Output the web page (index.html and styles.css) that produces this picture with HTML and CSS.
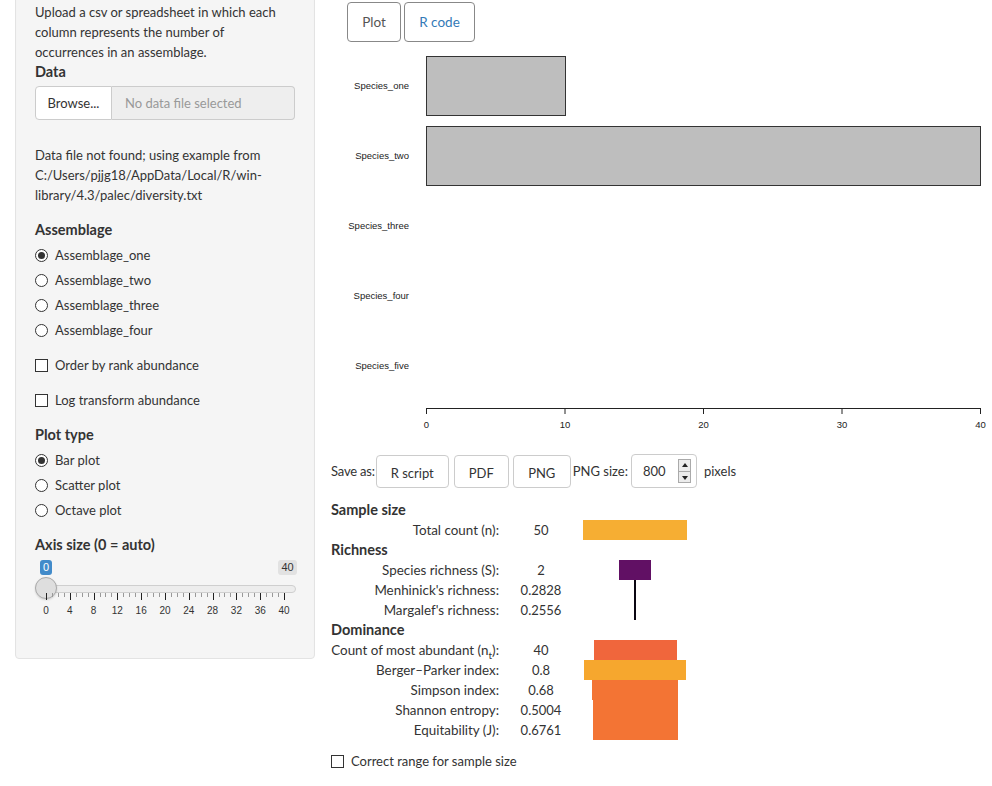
FILE: index.html
```html
<!DOCTYPE html>
<html>
<head>
<meta charset="utf-8">
<link rel="stylesheet" href="styles.css">
</head>
<body>
<div class="page">
  <aside class="well">
    <p class="intro">Upload a csv or spreadsheet in which each column represents the number of occurrences in an assemblage.</p>
    <div class="label lbl-data">Data</div>
    <div class="file-group">
      <div class="browse">Browse...</div>
      <div class="file-name">No data file selected</div>
    </div>
    <p class="note">Data file not found; using example from C:/Users/pjjg18/AppData/Local/R/win-library/4.3/palec/diversity.txt</p>

    <div class="label">Assemblage</div>
    <div class="options">
      <label class="opt"><span class="radio on"></span>Assemblage_one</label>
      <label class="opt"><span class="radio"></span>Assemblage_two</label>
      <label class="opt"><span class="radio"></span>Assemblage_three</label>
      <label class="opt"><span class="radio"></span>Assemblage_four</label>
    </div>
    <label class="opt check-row"><span class="check"></span>Order by rank abundance</label>
    <label class="opt check-row"><span class="check"></span>Log transform abundance</label>

    <div class="label">Plot type</div>
    <div class="options">
      <label class="opt"><span class="radio on"></span>Bar plot</label>
      <label class="opt"><span class="radio"></span>Scatter plot</label>
      <label class="opt"><span class="radio"></span>Octave plot</label>
    </div>

    <div class="label">Axis size (0 = auto)</div>
    <div class="slider">
      <span class="badge badge-from">0</span>
      <span class="badge badge-max">40</span>
      <span class="track"></span>
      <span class="handle"></span>
      <span class="ticks"></span>
      <span class="tick-labels">
        <span>0</span><span>4</span><span>8</span><span>12</span><span>16</span><span>20</span><span>24</span><span>28</span><span>32</span><span>36</span><span>40</span>
      </span>
    </div>
  </aside>

  <main class="main">
    <nav class="tabs">
      <span class="tab tab-active">Plot</span>
      <span class="tab tab-link">R code</span>
    </nav>

    <svg class="chart" width="661" height="400" viewBox="0 0 661 400">
      <rect x="95.5" y="14.5" width="139" height="59" fill="#bebebe" stroke="#333" stroke-width="1"/>
      <rect x="95.5" y="84.5" width="554" height="59" fill="#bebebe" stroke="#333" stroke-width="1"/>
      <g text-anchor="end" font-family="Liberation Sans, Arial, sans-serif" font-size="9.5" fill="#222">
        <text x="78" y="46.5">Species_one</text>
        <text x="78" y="116.5">Species_two</text>
        <text x="78" y="186.5">Species_three</text>
        <text x="78" y="256.5">Species_four</text>
        <text x="78" y="326.5">Species_five</text>
      </g>
      <g stroke="#222" stroke-width="1">
        <line x1="95.5" y1="366.5" x2="649.5" y2="366.5"/>
        <line x1="95.5" y1="366" x2="95.5" y2="372"/>
        <line x1="234" y1="366" x2="234" y2="372"/>
        <line x1="372.5" y1="366" x2="372.5" y2="372"/>
        <line x1="511" y1="366" x2="511" y2="372"/>
        <line x1="649.5" y1="366" x2="649.5" y2="372"/>
      </g>
      <g text-anchor="middle" font-family="Liberation Sans, Arial, sans-serif" font-size="9.5" fill="#222">
        <text x="95.5" y="386">0</text>
        <text x="234" y="386">10</text>
        <text x="372.5" y="386">20</text>
        <text x="511" y="386">30</text>
        <text x="649.5" y="386">40</text>
      </g>
    </svg>

    <div class="save-bar">
      <span class="save-label">Save as:</span>
      <span class="btn btn-r">R script</span>
      <span class="btn btn-pdf">PDF</span>
      <span class="btn btn-png">PNG</span>
      <span class="size-label">PNG size:</span>
      <span class="num-input">
        <span class="num-val">800</span>
        <span class="spinner"><span class="spin-up"></span><span class="spin-down"></span></span>
      </span>
      <span class="px-label">pixels</span>
    </div>

    <div class="stats">
      <div class="head">Sample size</div>
      <div class="lab">Total count (n):</div><div class="val">50</div>
      <div class="gfx"><span class="bar c-yellow" style="margin-left:0;width:104px"></span></div>

      <div class="head">Richness</div>
      <div class="lab">Species richness (S):</div><div class="val">2</div>
      <div class="gfx"><span class="bar c-purple" style="margin-left:36px;width:32px"></span></div>
      <div class="lab">Menhinick's richness:</div><div class="val">0.2828</div>
      <div class="gfx"><span class="stem" style="margin-left:51px"></span></div>
      <div class="lab">Margalef's richness:</div><div class="val">0.2556</div>
      <div class="gfx"><span class="stem" style="margin-left:51px"></span></div>

      <div class="head">Dominance</div>
      <div class="lab">Count of most abundant (n<sub>t</sub>):</div><div class="val">40</div>
      <div class="gfx"><span class="bar c-red" style="margin-left:11px;width:83px"></span></div>
      <div class="lab">Berger–Parker index:</div><div class="val">0.8</div>
      <div class="gfx"><span class="bar c-yellow2" style="margin-left:1px;width:102px"></span></div>
      <div class="lab">Simpson index:</div><div class="val">0.68</div>
      <div class="gfx"><span class="bar c-orange" style="margin-left:9px;width:86px"></span></div>
      <div class="lab">Shannon entropy:</div><div class="val">0.5004</div>
      <div class="gfx"><span class="bar c-orange" style="margin-left:10px;width:85px"></span></div>
      <div class="lab">Equitability (J):</div><div class="val">0.6761</div>
      <div class="gfx"><span class="bar c-orange" style="margin-left:10px;width:85px"></span></div>
    </div>

    <label class="opt correct"><span class="check"></span>Correct range for sample size</label>
  </main>
</div>
</body>
</html>
```
FILE: styles.css
```css
* { box-sizing: border-box; }
html, body { margin: 0; padding: 0; background: #fff; }
body {
  font-family: Lato, "Open Sans", sans-serif;
  font-size: 13px;
  line-height: 20px;
  color: #333;
}
.page {
  display: flex;
  align-items: flex-start;
  padding-left: 15px;
}

/* sidebar */
.well {
  width: 300px;
  flex: none;
  margin-top: -18px;
  padding: 19px 19px 38px;
  background: #f5f5f5;
  border: 1px solid #e3e3e3;
  border-radius: 4px;
  box-shadow: inset 0 1px 1px rgba(0,0,0,.05);
}
.intro { margin: 0; }
.label { font-weight: 700; font-size: 14.5px; margin: 15px 0 5px; }
.lbl-data { margin-top: 0; margin-bottom: 4px; }
.file-group {
  display: flex;
  height: 34px;
}
.browse {
  width: 77px;
  flex: none;
  background: #fff;
  border: 1px solid #ccc;
  border-radius: 4px 0 0 4px;
  display: flex; align-items: center; justify-content: center;
}
.file-name {
  flex: 1;
  background: #eee;
  border: 1px solid #ccc;
  border-left: 0;
  border-radius: 0 4px 4px 0;
  color: #999;
  display: flex; align-items: center;
  padding-left: 13px;
}
.note { margin: 25px 0 0; }
.options { display: flex; flex-direction: column; gap: 5px; }
.opt {
  display: flex;
  align-items: center;
  height: 20px;
  white-space: nowrap;
}
.radio, .check {
  width: 13px; height: 13px;
  flex: none;
  border: 1px solid #333;
  background: #fff;
  margin-right: 7px;
  position: relative;
}
.radio { border-radius: 50%; }
.radio.on::after {
  content: "";
  position: absolute;
  left: 2px; top: 2px;
  width: 7px; height: 7px;
  border-radius: 50%;
  background: #333;
}
.check-row { margin-top: 15px; }

/* slider */
.slider {
  position: relative;
  height: 60px;
  font-family: "Liberation Sans", Arial, sans-serif;
}
.badge {
  position: absolute;
  top: 0;
  height: 15px;
  font-size: 11px;
  line-height: 15px;
  text-align: center;
  border-radius: 3px;
}
.badge-from { left: 5px; width: 12px; background: #428bca; color: #fff; }
.badge-max { left: 243px; width: 19px; background: #e2e2e2; color: #333; }
.track {
  position: absolute;
  left: 1px; right: -1px;
  top: 25px; height: 8px;
  background: #ededed;
  border: 1px solid #cfcfcf;
  border-radius: 4px;
}
.handle {
  position: absolute;
  left: 0; top: 17px;
  width: 22px; height: 22px;
  border-radius: 50%;
  background: #dedede;
  border: 1px solid #aaa;
  box-shadow: 0 1px 2px rgba(0,0,0,.15);
}
.ticks {
  position: absolute;
  left: 11px; width: 239px;
  top: 33px; height: 7px;
  background:
    repeating-linear-gradient(90deg, #222 0 1px, transparent 1px 23.8px) 0 0 / 100% 7px no-repeat,
    repeating-linear-gradient(90deg, #999 0 1px, transparent 1px 5.95px) 0 0 / 100% 4px no-repeat;
}
.tick-labels {
  position: absolute;
  left: -1px; width: 262px;
  top: 44px;
  display: flex;
  justify-content: space-between;
  font-size: 10px;
  line-height: 14px;
  color: #333;
}
.tick-labels span { width: 24px; text-align: center; }

/* main */
.main {
  margin-left: 16px;
  flex: 1;
  min-width: 0;
}
.tabs {
  display: flex;
  gap: 3px;
  margin: 2px 0 0 16px;
}
.tab {
  height: 40px;
  display: flex; align-items: center; justify-content: center;
  border: 1px solid #888;
  border-radius: 4px;
  font-size: 13.5px;
}
.tab-active { width: 54px; color: #555; }
.tab-link { width: 71px; color: #337ab7; }
.chart { display: block; margin-top: 0; }

.save-bar {
  display: flex;
  align-items: center;
  height: 34px;
  margin-top: 12px;
}
.btn {
  height: 33px;
  display: flex; align-items: center; justify-content: center;
  padding-top: 4px;
  border: 1px solid #ccc;
  border-radius: 4px;
  background: #fff;
  color: #333;
}
.save-label { margin-right: 1px; letter-spacing: -0.2px; }
.btn-r { width: 73px; margin-right: 5px; }
.btn-pdf { width: 55px; margin-right: 4px; }
.btn-png { width: 58px; margin-right: 2px; }
.size-label { margin-right: 3px; }
.num-input {
  width: 66px; height: 34px;
  border: 1px solid #ccc;
  border-radius: 4px;
  display: flex; align-items: center;
  padding-left: 11px;
  position: relative;
}
.num-val { flex: 1; }
.spinner {
  width: 13px; height: 24px;
  margin-right: 5px;
  display: flex; flex-direction: column;
  border: 1px solid #aaa;
  background: #ececec;
}
.spin-up, .spin-down { flex: 1; position: relative; }
.spin-up { border-bottom: 1px solid #aaa; }
.spin-up::after, .spin-down::after {
  content: "";
  position: absolute;
  left: 3px; top: 3px;
  border-left: 3px solid transparent;
  border-right: 3px solid transparent;
}
.spin-up::after { border-bottom: 4px solid #222; }
.spin-down::after { border-top: 4px solid #222; top: 4px; }
.px-label { margin-left: 7px; }

.stats {
  display: grid;
  grid-template-columns: 168px 84px 1fr;
  grid-auto-rows: 20px;
  margin-top: 12px;
}
.head { grid-column: 1 / -1; font-weight: 700; font-size: 14.5px; }
.lab { text-align: right; white-space: nowrap; font-size: 13.4px; }
.lab sub { font-size: 10px; line-height: 0; }
.val { text-align: center; }
.gfx { display: flex; }
.bar { display: block; height: 20px; }
.stem { display: block; width: 2px; height: 20px; background: #0b0612; }
.c-yellow { background: #f6ae33; }
.c-yellow2 { background: #f6a72e; }
.c-purple { background: #611064; }
.c-red { background: #f0663c; }
.c-orange { background: #f37434; }
.correct { margin-top: 11px; }
```
